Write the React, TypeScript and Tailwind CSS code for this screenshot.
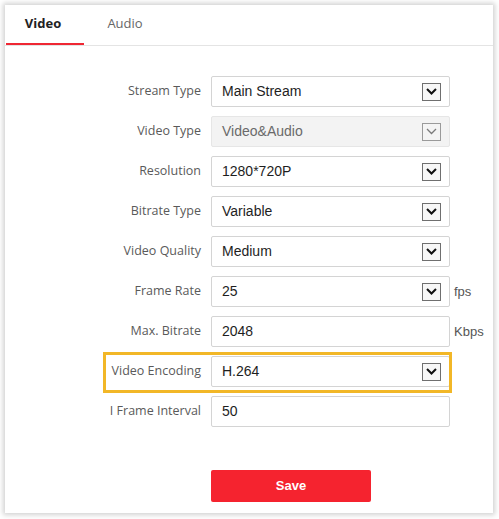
import { useState } from 'react';

type Field = {
  label: string;
  value: string;
  select?: boolean;
  disabled?: boolean;
  unit?: string;
};

const fields: Field[] = [
  { label: 'Stream Type', value: 'Main Stream', select: true },
  { label: 'Video Type', value: 'Video&Audio', select: true, disabled: true },
  { label: 'Resolution', value: '1280*720P', select: true },
  { label: 'Bitrate Type', value: 'Variable', select: true },
  { label: 'Video Quality', value: 'Medium', select: true },
  { label: 'Frame Rate', value: '25', select: true, unit: 'fps' },
  { label: 'Max. Bitrate', value: '2048', unit: 'Kbps' },
  { label: 'Video Encoding', value: 'H.264', select: true },
  { label: 'I Frame Interval', value: '50' },
];

const ArrowBox = ({ disabled }: { disabled?: boolean }) => (
  <span
    className={`flex h-[18px] w-[19px] items-center justify-center border ${
      disabled ? 'border-[#9a9a9a] bg-[#f4f4f4]' : 'border-[#6f6f6f] bg-[#f7f7f7]'
    }`}
  >
    <svg width="11" height="7" viewBox="0 0 11 7">
      <path
        d="M1 1 L5.5 5.5 L10 1"
        fill="none"
        stroke={disabled ? '#7a7a7a' : '#111'}
        strokeWidth={disabled ? 1.3 : 2}
      />
    </svg>
  </span>
);

export default function App() {
  const [tab, setTab] = useState('video');

  return (
    <div className="min-h-screen bg-white p-[5px] font-['Open_Sans',sans-serif]">
      <div className="relative h-[508px] w-[488px] bg-white shadow-[0_0_5px_2px_rgba(0,0,0,0.18)]">
        <div className="flex h-[41px] border-b border-[#e4e4e4]">
          <button
            onClick={() => setTab('video')}
            className={`ml-px w-[78px] border-b-2 pr-[4px] text-[13px] ${
              tab === 'video'
                ? 'border-[#ef2733] font-bold text-[#222]'
                : 'border-transparent text-[#666]'
            }`}
          >
            Video
          </button>
          <button
            onClick={() => setTab('audio')}
            className={`ml-[14px] w-[54px] border-b-2 text-[13px] ${
              tab === 'audio'
                ? 'border-[#ef2733] font-bold text-[#222]'
                : 'border-transparent text-[#666]'
            }`}
          >
            Audio
          </button>
        </div>

        <div className="flex flex-col gap-[9px] pt-[30px]">
          {fields.map((f) => (
            <div key={f.label} className="flex h-[31px] items-center">
              <span className="w-[196px] text-right text-[12.5px] text-[#5a5a5a]">
                {f.label}
              </span>
              <div
                className={`ml-[10px] flex h-[31px] w-[239px] items-center justify-between rounded-[2px] border pl-[10px] pr-[8px] font-['Liberation_Sans',sans-serif] text-[14px] ${
                  f.disabled
                    ? 'border-[#e6e6e6] bg-[#f3f3f3] text-[#6a6a6a]'
                    : 'border-[#d4d4d4] bg-white text-[#1e1e1e]'
                }`}
              >
                <span>{f.value}</span>
                {f.select && <ArrowBox disabled={f.disabled} />}
              </div>
              {f.unit && (
                <span className="ml-[4px] font-['Liberation_Sans',sans-serif] text-[13px] text-[#555]">
                  {f.unit}
                </span>
              )}
            </div>
          ))}
        </div>

        <div className="pl-[206px] pt-[43px]">
          <button className="h-[32px] w-[160px] rounded-[2px] bg-[#f5232f] font-['Liberation_Sans',sans-serif] text-[13px] font-bold text-white">
            Save
          </button>
        </div>

        <div className="pointer-events-none absolute left-[98px] top-[347px] h-[41px] w-[349px] border-[3px] border-[#f2b727]" />
      </div>
    </div>
  );
}
